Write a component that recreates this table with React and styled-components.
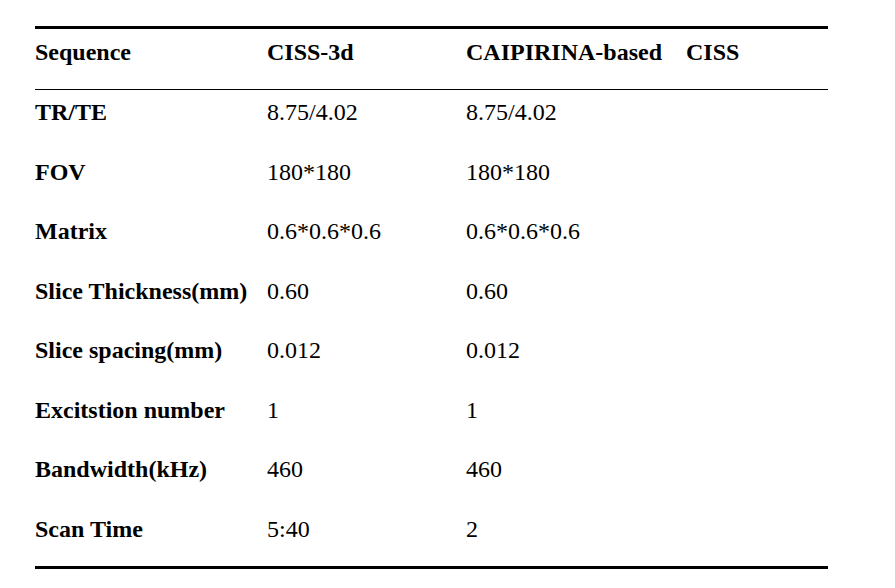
import React from "react";
import { styled, createGlobalStyle } from "styled-components";

const GlobalStyle = createGlobalStyle`
  body {
    margin: 0;
    background: #ffffff;
    font-family: "Liberation Serif", "Times New Roman", serif;
    color: #000000;
  }
`;

const Page = styled.div`
  width: 895px;
  height: 588px;
  padding-top: 26px;
  box-sizing: border-box;
  background: #ffffff;
`;

const Table = styled.div`
  margin-left: 35px;
  width: 793px;
  border-top: 3px solid #000;
  border-bottom: 3px solid #000;
`;

const Row = styled.div`
  display: grid;
  grid-template-columns: 232px 199px 1fr;
  height: ${(p) => (p.$head ? "61px" : "59.5px")};
  padding-top: ${(p) => (p.$head ? "10px" : "9px")};
  box-sizing: border-box;
  border-bottom: ${(p) => (p.$head ? "1px solid #000" : "none")};
  font-size: 24px;
  line-height: 26px;
`;

const Label = styled.div`
  font-weight: 700;
  white-space: pre;
`;

const Cell = styled.div`
  font-weight: ${(p) => (p.$bold ? 700 : 400)};
  white-space: pre;
`;

const rows = [
  ["TR/TE", "8.75/4.02", "8.75/4.02"],
  ["FOV", "180*180", "180*180"],
  ["Matrix", "0.6*0.6*0.6", "0.6*0.6*0.6"],
  ["Slice Thickness(mm)", "0.60", "0.60"],
  ["Slice spacing(mm)", "0.012", "0.012"],
  ["Excitstion number", "1", "1"],
  ["Bandwidth(kHz)", "460", "460"],
  ["Scan Time", "5:40", "2"],
];

const App = () => {
  return (
    <Page>
      <GlobalStyle />
      <Table>
        <Row $head>
          <Label>Sequence</Label>
          <Cell $bold>CISS-3d</Cell>
          <Cell $bold>{"CAIPIRINA-based    CISS"}</Cell>
        </Row>
        {rows.map((r) => (
          <Row key={r[0]}>
            <Label>{r[0]}</Label>
            <Cell>{r[1]}</Cell>
            <Cell>{r[2]}</Cell>
          </Row>
        ))}
      </Table>
    </Page>
  );
};

export default App;
